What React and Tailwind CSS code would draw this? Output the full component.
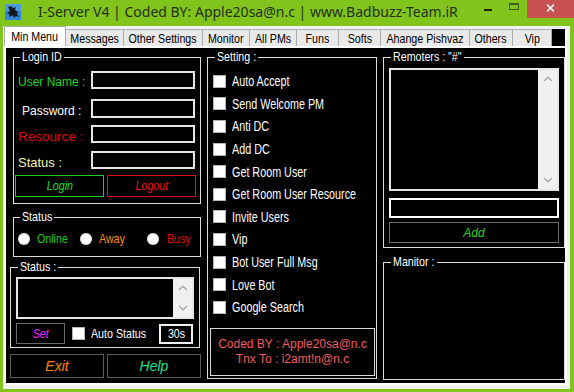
import React from "react";

const A = "font-['Liberation_Sans',Arial,sans-serif]";
const S = "inline-block origin-left scale-x-[0.82] whitespace-nowrap";
const SC = "inline-block scale-x-[0.82] whitespace-nowrap";
const SL = "inline-block origin-left scale-x-[0.77] whitespace-nowrap text-[14px] leading-[16px]";

function Check() {
  return <span className="block w-[13px] h-[13px] shrink-0 bg-white border border-[#b4b4b4]" />;
}

function Radio() {
  return <span className="block w-[12px] h-[12px] shrink-0 rounded-full bg-white shadow-[inset_0_0_2px_#9a9a9a]" />;
}

function VScroll() {
  return (
    <div className="w-[19px] h-full bg-[#f0f0f0] flex flex-col justify-between items-center py-[6px]">
      <svg width="10" height="6" viewBox="0 0 10 6">
        <polyline points="1,5 5,1.2 9,5" fill="none" stroke="#a8a8a8" strokeWidth="1.4" />
      </svg>
      <svg width="10" height="6" viewBox="0 0 10 6">
        <polyline points="1,1 5,4.8 9,1" fill="none" stroke="#a8a8a8" strokeWidth="1.4" />
      </svg>
    </div>
  );
}

const tabs = [
  ["Messages", "w-[58px]"],
  ["Other Settings", "w-[79px]"],
  ["Monitor", "w-[47px]"],
  ["All PMs", "w-[47px]"],
  ["Funs", "w-[42px]"],
  ["Softs", "w-[42px]"],
  ["Ahange Pishvaz", "w-[89px]"],
  ["Others", "w-[43px]"],
  ["Vip", "w-[39px]"],
];

const settings = [
  "Auto Accept",
  "Send Welcome PM",
  "Anti DC",
  "Add DC",
  "Get Room User",
  "Get Room User Resource",
  "Invite Users",
  "Vip",
  "Bot User Full Msg",
  "Love Bot",
  "Google Search",
];

export default function App() {
  return (
    <div className={`w-[574px] h-[392px] bg-[#80c41c] flex flex-col overflow-hidden ${A}`}>
      {/* title bar */}
      <div className="h-[26px] flex items-start shrink-0">
        <svg className="ml-[5px] mt-[4px] shrink-0" width="16" height="16" viewBox="0 0 16 16">
          <rect x="0" y="0" width="16" height="16" fill="#2f86d6" />
          <rect x="0" y="0" width="16" height="7" fill="#4a9be2" />
          <path d="M3 3 L6 2 L8 4 L11 3 L10 6 L13 8 L12 10 L14 13 L11 12 L9 14 L8 11 L5 13 L4 10 L2 9 L5 7 Z" fill="#101820" />
        </svg>
        <div className="ml-[17px] mt-[2px] text-[14px] leading-[20px] text-[#25301a] font-['Noto_Sans',sans-serif] whitespace-nowrap">
          I-Server V4 | Coded BY: Apple20sa@n.c | www.Badbuzz-Team.iR
        </div>
        <div className="ml-auto flex items-start shrink-0">
          <div className="w-[26px] h-[18px] flex justify-center">
            <span className="mt-[9px] w-[8px] h-[2px] bg-[#1c2410]" />
          </div>
          <div className="w-[26px] h-[18px] flex justify-center">
            <span className="mt-[3px] w-[10px] h-[7px] border border-t-2 border-[#3f5a14]" />
          </div>
          <div className="w-[47px] h-[18px] bg-[#c75050] flex justify-center">
            <svg className="mt-[4px]" width="9" height="8" viewBox="0 0 9 8">
              <path d="M1 0.5 L8 7.5 M8 0.5 L1 7.5" stroke="#ffffff" strokeWidth="1.6" />
            </svg>
          </div>
        </div>
      </div>

      {/* client */}
      <div className="ml-[3px] w-[567px] h-[363px] bg-[#f0f0f0] pl-[1px] pr-[3px] pb-[4px] flex flex-col shrink-0">
        {/* tabs */}
        <div className="h-[20px] flex items-end shrink-0 text-[13px] leading-[15px] text-black">
          <div className="w-[62px] h-[20px] bg-white border border-b-0 border-[#acacac] flex items-center justify-center pb-[1px]">
            <span className={SC}>Min Menu</span>
          </div>
          {tabs.map(([t, w]) => (
            <div
              key={t}
              className={`${w} h-[17px] bg-[#e9e9e9] border-t border-r border-[#acacac] flex items-center justify-center`}
            >
              <span className={SC}>{t}</span>
            </div>
          ))}
          <div className="flex-1 h-[17px] bg-black border-r-2 border-white" />
        </div>

        {/* page */}
        <div className="w-[563px] h-[339px] bg-black border-2 border-white flex items-start pl-[4px] gap-[6px] text-white text-[13px] leading-[14px]">
          {/* column 1 */}
          <div className="w-[191px] shrink-0 flex flex-col">
            <fieldset className="min-w-0 ml-[3px] w-[188px] mt-[2px] border border-[#dcdcdc] pb-[6px]">
              <legend className="ml-[6px] px-[2px] w-[44px] leading-[14px]"><span className={S}>Login ID</span></legend>
              <div className="mt-[7px] h-[18px] flex items-start">
                <span className="w-[77px] pl-[4px] mt-[4px] text-[12px] leading-[15px] text-[#1fd41f] whitespace-nowrap">User Name :</span>
                <div className="w-[104px] h-[18px] border-2 border-[#e6e6e6] bg-black" />
              </div>
              <div className="mt-[10px] h-[19px] flex items-start">
                <span className="w-[77px] pl-[8px] mt-[5px] text-[12px] leading-[15px] text-white whitespace-nowrap">Password :</span>
                <div className="w-[104px] h-[19px] border-2 border-[#e6e6e6] bg-black" />
              </div>
              <div className="mt-[7px] h-[18px] flex items-start">
                <span className="w-[77px] pl-[4px] mt-[4px] text-[13.5px] leading-[16px] text-[#e00000] whitespace-nowrap">Resource :</span>
                <div className="w-[104px] h-[18px] border-2 border-[#e6e6e6] bg-black" />
              </div>
              <div className="mt-[8px] h-[18px] flex items-start">
                <span className="w-[77px] pl-[4px] mt-[4px] text-[13px] leading-[15px] text-[#f4f4b0] whitespace-nowrap">Status :</span>
                <div className="w-[104px] h-[18px] border-2 border-[#e6e6e6] bg-black" />
              </div>
              <div className="mt-[6px] ml-[1px] flex gap-[3px]">
                <div className="w-[89px] h-[22px] border border-[#22d022] flex items-center justify-center italic text-[#22e022]"><span className={SC}>Login</span></div>
                <div className="w-[89px] h-[22px] border border-[#e01010] flex items-center justify-center italic text-[#f01010]"><span className={SC}>Logout</span></div>
              </div>
            </fieldset>

            <fieldset className="min-w-0 ml-[3px] w-[188px] mt-[6px] border border-[#dcdcdc] pb-[10px]">
              <legend className="ml-[6px] px-[2px] w-[34px] leading-[14px]"><span className={S}>Status</span></legend>
              <div className="mt-[8px] h-[14px] flex items-center">
                <div className="ml-[4px] w-[62px] flex items-center gap-[7px]">
                  <Radio />
                  <span className={`${S} text-[#19c619]`}>Online</span>
                </div>
                <div className="w-[67px] flex items-center gap-[7px]">
                  <Radio />
                  <span className={`${S} text-[#ff8a00]`}>Away</span>
                </div>
                <div className="flex items-center gap-[8px]">
                  <Radio />
                  <span className={`${S} text-[#e80000]`}>Busy</span>
                </div>
              </div>
            </fieldset>

            <fieldset className="min-w-0 w-[190px] mt-[3px] border border-[#dcdcdc] pb-[3px]">
              <legend className="ml-[7px] px-[2px] w-[40px] leading-[14px]"><span className={S}>Status :</span></legend>
              <div className="ml-[5px] mt-[3px] w-[178px] h-[42px] border-2 border-[#e6e6e6] bg-black flex justify-end">
                <VScroll />
              </div>
              <div className="ml-[5px] mt-[4px] w-[177px] h-[21px] flex items-center">
                <div className="w-[49px] h-[21px] border border-[#6a6a6a] flex items-center justify-center italic text-[#ff22ff]"><span className={SC}>Set</span></div>
                <span className="ml-[7px]"><Check /></span>
                <span className={`ml-[6px] text-white ${S}`}>Auto Status</span>
                <div className="ml-auto w-[34px] h-[20px] border-2 border-[#f0f0f0] flex items-center justify-center text-white"><span className={SC}>30s</span></div>
              </div>
            </fieldset>

            <div className="mt-[6px] flex gap-[3px]">
              <div className="w-[94px] h-[24px] border border-[#5a5a5a] flex items-center justify-center italic text-[14px] text-[#ff8000]">Exit</div>
              <div className="w-[94px] h-[24px] border border-[#5a5a5a] flex items-center justify-center italic text-[14px] text-[#14e28c]">Help</div>
            </div>
          </div>

          {/* column 2 */}
          <fieldset className="min-w-0 shrink-0 w-[170px] mt-[2px] border border-[#dcdcdc] pb-[2px]">
            <legend className="ml-[7px] px-[2px] w-[43px] leading-[14px]"><span className={S}>Setting :</span></legend>
            <div className="pt-[6px] flex flex-col">
              {settings.map((s) => (
                <div key={s} className="h-[22.6px] flex items-center pl-[5px] gap-[6px]">
                  <Check />
                  <span className={SL}>{s}</span>
                </div>
              ))}
            </div>
            <div className="mt-[9.4px] ml-[2px] w-[165px] h-[48px] border border-[#d8d8d8] flex flex-col items-center justify-center text-[12px] leading-[15px] text-[#f25c5c]">
              <span>Coded BY : Apple20sa@n.c</span>
              <span>Tnx To : i2amt!n@n.c</span>
            </div>
          </fieldset>

          {/* column 3 */}
          <div className="w-[182px] shrink-0 flex flex-col">
            <fieldset className="min-w-0 w-[182px] mt-[2px] border border-[#dcdcdc] pb-[4px]">
              <legend className="ml-[7px] px-[2px] w-[73px] leading-[14px]"><span className={S}>Remoters : "#"</span></legend>
              <div className="ml-[5px] mt-[4px] w-[170px] h-[123px] border-2 border-[#e6e6e6] bg-black flex justify-end">
                <VScroll />
              </div>
              <div className="ml-[5px] mt-[7px] w-[170px] h-[20px] border-2 border-white bg-black" />
              <div className="ml-[5px] mt-[4px] w-[170px] h-[21px] border border-[#6a6a6a] flex items-center justify-center italic text-[12px] text-[#22d022]">Add</div>
            </fieldset>
            <fieldset className="min-w-0 w-[182px] mt-[7px] border border-[#dcdcdc]">
              <legend className="ml-[7px] px-[2px] w-[46px] leading-[14px]"><span className={S}>Manitor :</span></legend>
              <div className="h-[110px]" />
            </fieldset>
          </div>
        </div>
      </div>
    </div>
  );
}
